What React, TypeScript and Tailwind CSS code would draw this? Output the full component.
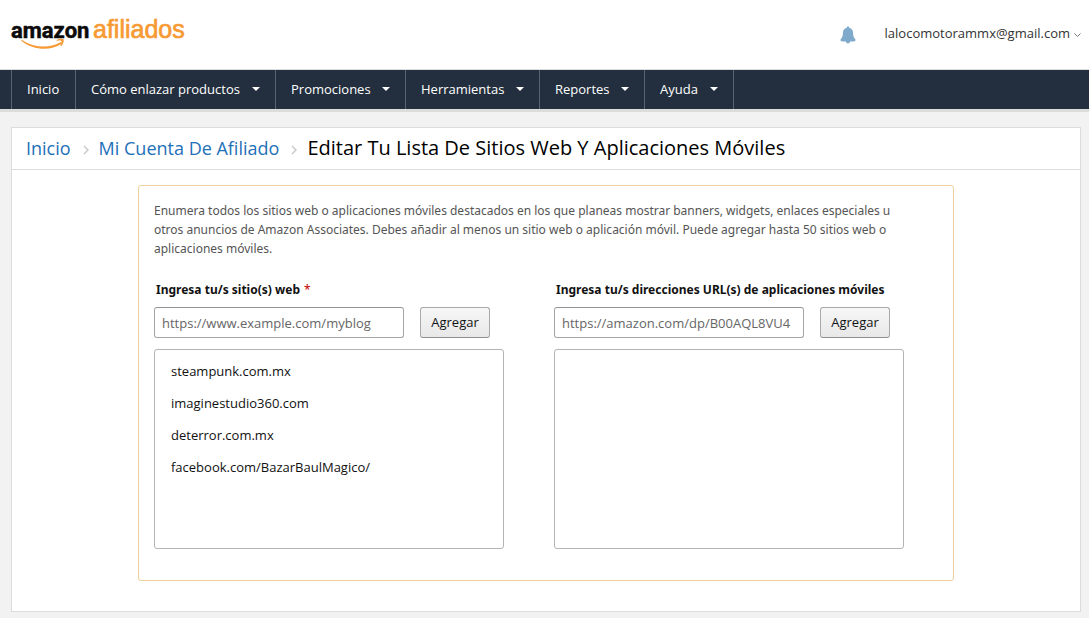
import { useState } from "react";

const navItems = [
  { label: "Inicio", width: "w-16", menu: false },
  { label: "Cómo enlazar productos", width: "w-[200px]", menu: true },
  { label: "Promociones", width: "w-[130px]", menu: true },
  { label: "Herramientas", width: "w-[134px]", menu: true },
  { label: "Reportes", width: "w-[105px]", menu: true },
  { label: "Ayuda", width: "w-[89px]", menu: true },
];

const mySites = [
  "steampunk.com.mx",
  "imaginestudio360.com",
  "deterror.com.mx",
  "facebook.com/BazarBaulMagico/",
];

const Logo = () => (
  <a href="#" aria-label="amazon afiliados" className="block">
    <svg width="180" height="44" viewBox="0 -4 180 44">
      <text x="0" y="21" fontFamily="Roboto, sans-serif" fontWeight="700" fontSize="22" fill="#0b0b0b" stroke="#0b0b0b" strokeWidth="0.5">
        amazon
      </text>
      <text x="82" y="21" fontFamily="Liberation Sans, Arial, sans-serif" fontSize="25" fill="#f79a34" stroke="#f79a34" strokeWidth="0.7">
        afiliados
      </text>
      <path d="M11 23c12 8 27 8.500 38 2.500 1.500-.8 2.500.5 1.300 1.500C40 34 22 33.500 10.500 24c-.6-.6 0-1.300.5-1z" fill="#f79a34" />
      <path d="M45.500 23.200c2-1.600 6-1.900 7-1 .8.900-.1 5-2.500 7-.4.300-.8.100-.6-.4.600-1.400 1.500-4 1-4.700-.6-.7-3.100-.5-4.500-.3-.5.100-.7-.3-.4-.6z" fill="#f79a34" />
    </svg>
  </a>
);

const Chevron = () => (
  <svg width="6" height="10" viewBox="0 0 6 10" fill="none" stroke="#c4c4c4" strokeWidth="1.3" aria-hidden="true" className="mt-1 mr-2.5 ml-3">
    <path d="M1 1l4 4-4 4" />
  </svg>
);

type SiteListProps = {
  id: string;
  label: string;
  placeholder: string;
  required?: boolean;
  initial: string[];
};

const SiteList = ({ id, label, placeholder, required, initial }: SiteListProps) => {
  const [sites, setSites] = useState<string[]>(initial);
  const [value, setValue] = useState("");

  const addSite = () => {
    if (!value.trim()) return;
    setSites([...sites, value.trim()]);
    setValue("");
  };

  return (
    <div>
      <label htmlFor={id} className="block px-0.5 font-['Noto_Sans',sans-serif] text-xs leading-5 font-bold text-[#111] whitespace-nowrap">
        {label}
        {required && <span className="ml-1 font-normal text-[#c40000]">*</span>}
      </label>
      <div className="mt-[7px] flex gap-4">
        <input
          id={id}
          type="text"
          value={value}
          placeholder={placeholder}
          onChange={(e) => setValue(e.target.value)}
          className="h-[31px] w-[250px] rounded-[3px] border border-[#a6a6a6] border-t-[#949494] bg-white px-[7px] text-[13px] placeholder:text-[#666]"
        />
        <button
          type="button"
          onClick={addSite}
          className="h-[31px] w-[70px] rounded-[3px] border border-[#a9a9a9] border-b-[#8f8f8f] bg-linear-to-b from-[#f7f7f7] to-[#e8e8e8] text-[13px] text-[#111]"
        >
          Agregar
        </button>
      </div>
      <ul className="mt-[11px] h-[200px] w-[350px] overflow-y-auto rounded-[3px] border border-[#b4b4b4] px-4 py-[5px]">
        {sites.map((site) => (
          <li key={site} className="text-[13px] leading-8 text-[#111]">{site}</li>
        ))}
      </ul>
    </div>
  );
};

const App = () => {
  return (
    <div className="min-h-screen bg-[#f2f2f2] pb-1.5 font-['Open_Sans','Noto_Sans',sans-serif]">
      {/* Header */}
      <header className="flex h-[70px] items-center justify-between border-b border-[#ddd] bg-white pr-2 pl-[11px]">
        <Logo />
        <div className="flex items-center gap-7">
          <button type="button" aria-label="Notificaciones">
            <svg width="18" height="18" viewBox="0 0 18 18" fill="#7faacb">
              <path d="M9 .5c.8 0 1.200.5 1.200 1.200 2.500.6 3.800 2.600 3.900 5.100.1 3.400.5 4.700 2 6.300.8.800.6 1.900-.5 2.100-1.300.2-2.900.3-4.500.4-.1 1-.9 1.900-2.100 1.900s-2-.9-2.100-1.900c-1.600-.1-3.200-.2-4.500-.4-1.100-.2-1.300-1.300-.5-2.100 1.500-1.600 1.900-2.900 2-6.300.1-2.500 1.400-4.500 3.900-5.100C7.800 1 8.200.5 9 .5z" />
            </svg>
          </button>
          <button type="button" className="flex items-center gap-1 pb-0.5 text-[13px] text-[#333]">
            lalocomotorammx@gmail.com
            <svg width="7" height="5" viewBox="0 0 7 5" fill="none" stroke="#777" aria-hidden="true" className="mt-1">
              <path d="M.5.5l3 3 3-3" />
            </svg>
          </button>
        </div>
      </header>

      {/* Main navigation */}
      <nav className="border-b-3 border-[#dcdcdc] bg-[#232f3e] pl-[11px]">
        <ul className="flex h-[39px] border-l border-[#596471]">
          {navItems.map((item) => (
            <li key={item.label} className={`${item.width} shrink-0 border-r border-[#596471]`}>
              <a href="#" className="flex h-full items-center justify-between px-[15px] text-[13px] whitespace-nowrap text-white">
                {item.label}
                {item.menu && (
                  <svg width="8" height="4" viewBox="0 0 8 4" fill="#fff" aria-hidden="true" className="mb-0.5">
                    <path d="M0 0h8L4 4z" />
                  </svg>
                )}
              </a>
            </li>
          ))}
        </ul>
      </nav>

      <main className="mt-[15px] mr-2 ml-[11px] border border-[#dcdcdc] bg-white pb-[30px]">
        <div className="flex h-[42px] items-center border-b border-[#dcdcdc] px-3.5 pb-0.5 text-lg whitespace-nowrap">
          <a href="#" className="text-[#1e70b8]">Inicio</a>
          <Chevron />
          <a href="#" className="text-[#1e70b8]">Mi Cuenta De Afiliado</a>
          <Chevron />
          <h1 className="text-xl text-black">Editar Tu Lista De Sitios Web Y Aplicaciones Móviles</h1>
        </div>

        {/* Sites form */}
        <form className="mx-auto mt-[15px] max-w-[816px] rounded-[3px] border border-[#edd09a] px-[15px] pt-[15px] pb-[31px]">
          <p className="pr-6 font-['Noto_Sans',sans-serif] text-xs leading-[19px] text-[#555]">
            Enumera todos los sitios web o aplicaciones móviles destacados en los que planeas mostrar banners, widgets, enlaces especiales u
            otros anuncios de Amazon Associates. Debes añadir al menos un sitio web o aplicación móvil. Puede agregar hasta 50 sitios web o
            aplicaciones móviles.
          </p>
          <div className="mt-[22px] flex gap-[50px]">
            <SiteList
              id="websites"
              label="Ingresa tu/s sitio(s) web"
              placeholder="https://www.example.com/myblog"
              required
              initial={mySites}
            />
            <SiteList
              id="mobile-apps"
              label="Ingresa tu/s direcciones URL(s) de aplicaciones móviles"
              placeholder="https://amazon.com/dp/B00AQL8VU4"
              initial={[]}
            />
          </div>
        </form>
      </main>
    </div>
  );
};

export default App;
